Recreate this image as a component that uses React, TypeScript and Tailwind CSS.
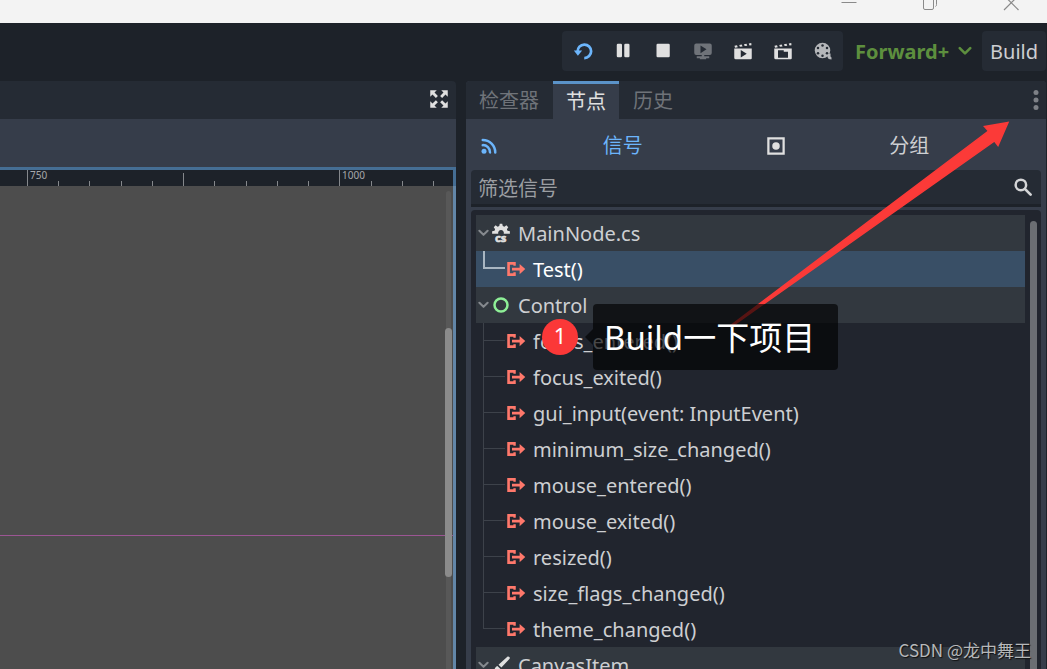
import type { ReactNode } from "react";

type IconProps = {
  className?: string;
  children: ReactNode;
};

function Icon({ className = "", children }: IconProps) {
  return (
    <svg
      viewBox="0 0 16 16"
      fill="currentColor"
      aria-hidden="true"
      className={`h-5 w-5 shrink-0 ${className}`}
    >
      {children}
    </svg>
  );
}

function ClapperTop() {
  return (
    <path d="M1.2 3.7l2-.3.6 1.5-2.2.4zM5 3.1l2-.3.6 1.5-2.1.3zM8.8 2.5l2-.3.6 1.5-2.1.3zM12.6 1.9l2-.4.2 1.8-1.6.3z" />
  );
}

function SignalIcon() {
  return (
    <Icon className="text-[#ff786b]">
      <path d="M1 2.4h6.8v3H5.9V4.6H3.1v6.8h2.8v-.8h1.9v3H1z" />
      <path d="M4.8 6.9h6.1V3.9L15.4 8l-4.5 4.1V9.1H4.8z" />
    </Icon>
  );
}

function Chevron({ className = "" }: { className?: string }) {
  return (
    <svg
      viewBox="0 0 12 8"
      fill="none"
      stroke="currentColor"
      aria-hidden="true"
      className={`shrink-0 ${className}`}
    >
      <path d="M1.5 1.5 6 6l4.5-4.5" strokeWidth="2.2" strokeLinecap="round" strokeLinejoin="round" />
    </svg>
  );
}

const runButtons = [
  {
    label: "重新运行",
    color: "text-[#6cb5fb]",
    icon: (
      <>
        <path
          d="M3.7 8.4A5.4 5.4 0 1 1 9 13.6"
          fill="none"
          stroke="currentColor"
          strokeWidth="2.2"
        />
        <path d="M.7 7.5h6.6L3.9 11.7z" />
      </>
    ),
  },
  {
    label: "暂停",
    color: "text-[#e0e0e0]",
    icon: (
      <>
        <rect x="3" y="2.2" width="4.2" height="10.8" rx="1" />
        <rect x="9" y="2.2" width="4.2" height="10.8" rx="1" />
      </>
    ),
  },
  {
    label: "停止",
    color: "text-[#e0e0e0]",
    icon: <rect x="2.8" y="2.2" width="10.6" height="10.8" rx="1" />,
  },
  {
    label: "远程调试",
    color: "text-[#6f7379]",
    icon: (
      <>
        <path
          fillRule="evenodd"
          d="M2.6 2h10.8A1.6 1.6 0 0 1 15 3.6v6a1.6 1.6 0 0 1-1.6 1.6H2.6A1.6 1.6 0 0 1 1 9.6v-6A1.6 1.6 0 0 1 2.6 2zM6 3.5v6.2l4.8-3.1z"
        />
        <path d="M7 11h2v1.2h4v1.6h-2.5v.8h-5v-.8H3v-1.6h4z" />
      </>
    ),
  },
  {
    label: "运行当前场景",
    color: "text-[#e0e0e0]",
    icon: (
      <>
        <ClapperTop />
        <path
          fillRule="evenodd"
          d="M1 6h14v7.8a.8.8 0 0 1-.8.8h-12A1.2 1.2 0 0 1 1 13.4zM6.2 7.2v6l4.8-3z"
        />
      </>
    ),
  },
  {
    label: "运行自定义场景",
    color: "text-[#e0e0e0]",
    icon: (
      <>
        <ClapperTop />
        <path
          fillRule="evenodd"
          d="M1 6h14v7.8a.8.8 0 0 1-.8.8h-12A1.2 1.2 0 0 1 1 13.4zM4 7.3v6h8V8.6H8.6V7.3z"
        />
      </>
    ),
  },
  {
    label: "影片制作模式",
    color: "text-[#b4b6b9]",
    icon: (
      <>
        <circle cx="7.6" cy="7.6" r="6.2" />
        <path d="M11 10h3v2.4l.8.7v1.6c-1.8 0-2.8-.6-3.2-2z" />
        <g fill="#252b34">
          <circle cx="7.6" cy="3.5" r="1" />
          <circle cx="4" cy="5.6" r="1" />
          <circle cx="11.2" cy="5.6" r="1" />
          <circle cx="4" cy="9.7" r="1" />
          <circle cx="11.2" cy="9.7" r="1" />
          <circle cx="7.6" cy="11.7" r="1" />
        </g>
      </>
    ),
  },
];

const controlSignals = [
  "focus_entered()",
  "focus_exited()",
  "gui_input(event: InputEvent)",
  "minimum_size_changed()",
  "mouse_entered()",
  "mouse_exited()",
  "resized()",
  "size_flags_changed()",
  "theme_changed()",
];

// x position and height of every ruler mark
const rulerMarks = [
  [27, 16], [58, 5], [89, 5], [121, 5], [152, 5], [183, 13],
  [214, 5], [246, 5], [277, 5], [308, 5], [339, 16], [371, 5],
  [402, 5], [433, 5],
];

function TitleBar() {
  const button = "flex h-full w-[72px] items-start justify-center text-[#8a8a8a]";

  return (
    <header className="flex h-[23px] shrink-0 justify-end gap-[9px] bg-[#f3f3f3]">
      <button type="button" aria-label="最小化" className={button}>
        <svg viewBox="0 0 16 11" className="h-[11px] w-4" stroke="currentColor">
          <path d="M.5 2.5h15" />
        </svg>
      </button>
      <button type="button" aria-label="还原" className={button}>
        <svg viewBox="0 0 16 11" className="h-[11px] w-4" stroke="currentColor" fill="none">
          <path d="M1.5-1v9q0 1.5 1.5 1.5h7q1.5 0 1.5-1.5v-9M14.5-1v5.500q0 1.5-1 2" />
        </svg>
      </button>
      <button type="button" aria-label="关闭" className={button}>
        <svg viewBox="0 0 16 11" className="h-[11px] w-4" stroke="currentColor" strokeWidth="1.2">
          <path d="M1 10 15.5-4.5M15.5 10 1-4.5" />
        </svg>
      </button>
    </header>
  );
}

function Toolbar() {
  return (
    <div className="flex h-[58px] shrink-0 items-start justify-end pt-2">
      <div className="flex h-10 rounded-sm bg-[#252b34] pl-px">
        {runButtons.map((item) => (
          <button
            key={item.label}
            type="button"
            aria-label={item.label}
            className={`flex w-10 items-center justify-center ${item.color}`}
          >
            <Icon>{item.icon}</Icon>
          </button>
        ))}
      </div>
      <div className="relative ml-3 flex h-10 items-center text-[#5d8f3e]">
        <select
          aria-label="渲染方式"
          className="appearance-none bg-transparent pr-[22px] pt-px font-bold leading-7 outline-none"
        >
          <option>Forward+</option>
        </select>
        <Chevron className="pointer-events-none absolute right-0 h-[10px] w-[14px]" />
      </div>
      <button type="button" className="ml-[10px] mr-px h-10 rounded-sm bg-[#252b34] px-2 pt-px text-[#cdcfd2]">
        Build
      </button>
    </div>
  );
}

function Viewport() {
  return (
    <section className="flex min-w-0 flex-1 flex-col">
      <div className="flex h-[38px] shrink-0 items-center justify-end rounded-tr bg-[#252b34] pb-[2px] pr-[7px]">
        <button type="button" aria-label="专注模式" className="text-[#e0e0e0]">
          <Icon>
            <path d="M1 1h5.2L4.4 2.8l2.7 2.7-1.6 1.6-2.7-2.7L1 6.2zM15 1v5.2l-1.8-1.8-2.7 2.7-1.6-1.6 2.7-2.7L9.8 1zM1 15V9.8l1.8 1.8 2.7-2.7 1.6 1.6-2.7 2.7L6.2 15zM15 15H9.8l1.8-1.8-2.7-2.7 1.6-1.6 2.7 2.7L15 9.8z" />
          </Icon>
        </button>
      </div>
      <div className="h-12 shrink-0 bg-[#363d4a]" />
      <div className="relative h-[19px] shrink-0 overflow-hidden border-r-[3px] border-t-[3px] border-[#456e94] bg-[#1d2229]">
        <svg className="absolute inset-0 h-4 w-full" stroke="#85888c">
          {rulerMarks.map(([x, height]) => (
            <path key={x} d={`M${x + 0.5} ${16 - height}V16`} />
          ))}
        </svg>
        <div className="flex pl-[30px] text-[10px] leading-[10px] text-[#a6a8ab]">
          <span className="w-[312px]">750</span>
          <span>1000</span>
        </div>
      </div>
      <div className="relative flex-1 border-r-[3px] border-[#6286a8] bg-[#4d4d4d]">
        <div className="absolute inset-x-0 top-[349px] h-px bg-[#9c5694]" />
        <div className="absolute bottom-0 right-[2px] top-[5px] w-[5px] rounded-t bg-[#585858]" />
        <div className="absolute right-px top-[142px] h-[249px] w-[7px] rounded bg-[#8b8b8b]" />
      </div>
    </section>
  );
}

function GroupRow({ name, icon }: { name: string; icon: ReactNode }) {
  return (
    <div className="flex h-9 items-center bg-[#32383f] pl-[2px] text-[#cdcfd2]">
      <Chevron className="mr-[2px] h-2 w-[11px] text-[#85898e]" />
      {icon}
      <span className="ml-[7px] pt-[2px]">{name}</span>
    </div>
  );
}

type SignalRowProps = {
  name: string;
  selected?: boolean;
  last?: boolean;
};

function SignalRow({ name, selected, last }: SignalRowProps) {
  return (
    <li
      className={`flex h-9 items-center pl-[7px] ${
        selected ? "bg-[#394f66] text-white" : "text-[#cdcfd2]"
      }`}
    >
      <div className="mr-px flex w-[22px] flex-col self-stretch">
        <div
          className={`h-[18px] ${
            selected
              ? "border-b-2 border-l-2 border-[#a9b6c2]"
              : "border-b border-l border-[#3d424a]"
          }`}
        />
        {!last && <div className="flex-1 border-l border-[#3d424a]" />}
      </div>
      <SignalIcon />
      <span className="ml-[7px] pt-[2px]">{name}</span>
    </li>
  );
}

function SignalTree() {
  return (
    <div className="mx-[5px] mt-[3px] flex min-h-0 flex-1 gap-[5px] overflow-hidden rounded-t-sm bg-[#21252e] pl-[5px] pr-1 pt-[5px]">
      <div className="min-w-0 flex-1">
        <GroupRow
          name="MainNode.cs"
          icon={
            <Icon className="overflow-visible text-[#e0e0e0]">
              <path
                fillRule="evenodd"
                d="M7 .5h2l.4 1.9 1.3.5 1.600-1.1 1.5 1.5-1.1 1.6.5 1.3 1.9.4v2h-4.9a2.3 2.3 0 1 0-4.4 0H.9v-2l1.900-.4.5-1.3-1.1-1.6 1.5-1.5 1.6 1.1 1.3-.5z"
              />
              <text x="3.2" y="15.2" fontSize="9" fontWeight="700" stroke="currentColor" strokeWidth=".5">
                cs
              </text>
            </Icon>
          }
        />
        <ul>
          <SignalRow name="Test()" selected last />
        </ul>
        <GroupRow
          name="Control"
          icon={
            <Icon className="text-[#8eef97]">
              <circle cx="8" cy="8" r="5.2" fill="none" stroke="currentColor" strokeWidth="2" />
            </Icon>
          }
        />
        <ul>
          {controlSignals.map((name, index) => (
            <SignalRow key={name} name={name} last={index === controlSignals.length - 1} />
          ))}
        </ul>
        <GroupRow
          name="CanvasItem"
          icon={
            <Icon className="text-[#e0e0e0]">
              <path d="M13.3 1.2a1.3 1.3 0 0 1 1.6 1.8L8.3 10 6 7.7zM5.1 8.7l2.3 2.3C7 13.5 5 15 1.5 15c1.3-1.5 1-5.6 3.6-6.3z" />
            </Icon>
          }
        />
      </div>
      <div className="mt-[6px] w-[7px] rounded-t bg-[#6b6e73]" />
    </div>
  );
}

function Callout() {
  return (
    <>
      <svg
        viewBox="0 0 282 208"
        aria-hidden="true"
        className="pointer-events-none absolute left-[262px] top-[40px] h-[208px] w-[282px]"
      >
        <path
          d="M280 1.500 256.500 5.500l4 4.500L2 205l1 1L266.500 20l3.500 4.500z"
          fill="#fb3a38"
          stroke="#fb3a38"
          strokeWidth="1.5"
        />
      </svg>
      <div className="absolute left-[127px] top-[223px] flex h-[66px] items-center rounded bg-black/65 pl-[11px] pr-[23px] pt-[2px] text-[33px] text-white">
        <div className="absolute -left-2 top-[25px] h-4 w-2 bg-black/65 [clip-path:polygon(0_50%,100%_0,100%_100%)]" />
        Build一下项目
      </div>
      <div className="absolute left-[76px] top-[238px] flex h-9 w-9 items-center justify-center rounded-full bg-[#fb3838] pb-1 text-[22px] leading-none text-white">
        1
      </div>
    </>
  );
}

function NodeDock() {
  return (
    <aside className="relative mr-px flex w-[580px] shrink-0 flex-col rounded-t bg-[#363d4a]">
      <div className="flex h-[38px] shrink-0 rounded-t bg-[#252b34] text-[#6f7379]">
        <button type="button" className="px-[13px] pt-[2px]">检查器</button>
        <button
          type="button"
          className="ml-px border-t-[3px] border-[#5b93c9] bg-[#363d4a] px-[13px] text-[#e0e0e0]"
        >
          节点
        </button>
        <button type="button" className="ml-px px-[13px] pt-[2px]">历史</button>
        <button type="button" aria-label="更多选项" className="ml-auto text-[#7e8187]">
          <Icon>
            <circle cx="8" cy="2" r="2" />
            <circle cx="8" cy="8" r="2" />
            <circle cx="8" cy="14" r="2" />
          </Icon>
        </button>
      </div>

      <div className="flex h-[51px] shrink-0 gap-[3px] px-[5px] pt-[3px]">
        <button type="button" className="flex flex-1 items-center px-2 text-[#6cb5fb]">
          <Icon>
            <circle cx="4" cy="12.2" r="2" />
            <path
              d="M3 7.3a5.7 5.7 0 0 1 5.8 5.8M3 3.2a10 10 0 0 1 10 10"
              fill="none"
              stroke="currentColor"
              strokeWidth="2"
              strokeLinecap="round"
            />
          </Icon>
          <span className="flex-1">信号</span>
        </button>
        <button type="button" className="flex flex-1 items-center px-2 text-[#cdcfd2]">
          <Icon className="text-[#e0e0e0]">
            <rect x="1.9" y="1.9" width="12.2" height="12.2" fill="none" stroke="currentColor" strokeWidth="1.8" />
            <circle cx="8" cy="8" r="3" />
          </Icon>
          <span className="flex-1">分组</span>
        </button>
      </div>

      <label className="mx-[5px] flex h-[37px] shrink-0 items-center rounded-t-sm border-b-[3px] border-[#1d2229] bg-[#252b34] pl-[7px] pr-2">
        <input
          type="text"
          aria-label="筛选信号"
          placeholder="筛选信号"
          className="min-w-0 flex-1 bg-transparent pt-[3px] outline-none placeholder:text-[#9b9ea2]"
        />
        <Icon className="text-[#d4d5d7]">
          <circle cx="6.3" cy="6.3" r="4.2" fill="none" stroke="currentColor" strokeWidth="2" />
          <path d="m9.5 9.5 4.6 4.6" stroke="currentColor" strokeWidth="2.2" strokeLinecap="round" />
        </Icon>
      </label>

      <SignalTree />
      <Callout />
    </aside>
  );
}

export default function App() {
  return (
    <div className="relative flex h-screen flex-col overflow-hidden bg-[#1d2229] font-['Noto_Sans','Noto_Sans_CJK_SC',sans-serif] text-xl">
      <TitleBar />
      <Toolbar />
      <main className="flex min-h-0 flex-1 gap-[10px]">
        <Viewport />
        <NodeDock />
      </main>
      <p className="absolute bottom-[6px] right-4 font-['Noto_Sans_CJK_SC',sans-serif] text-[17px] leading-[26px] text-[#b6b8ba] [text-shadow:1px_1px_1px_#111]">
        CSDN @龙中舞王
      </p>
    </div>
  );
}
